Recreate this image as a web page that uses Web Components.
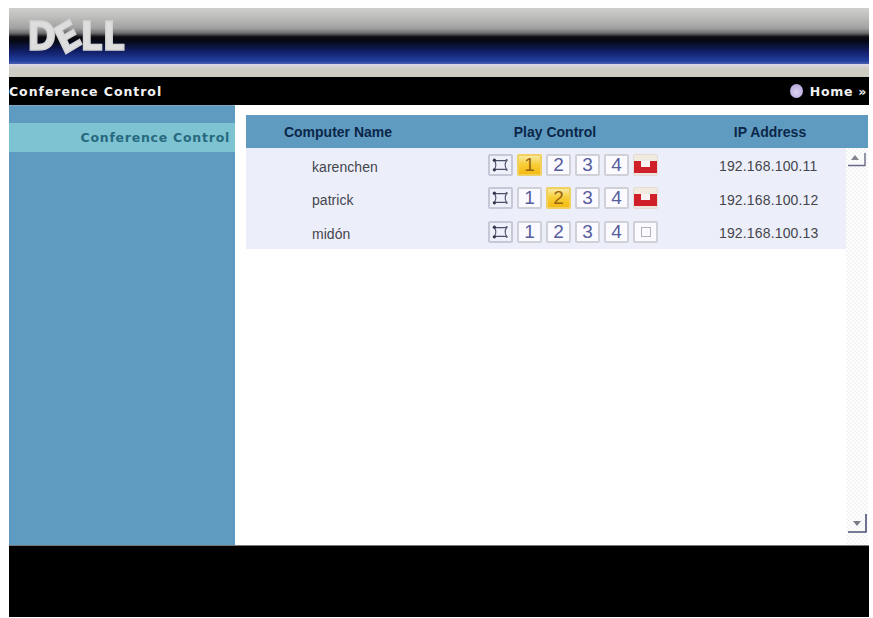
<!DOCTYPE html>
<html>
<head>
<meta charset="utf-8">
<title>Conference Control</title>
<style>
  html, body { margin: 0; background: #fff; }
  body { padding: 8px 4px 0 9px; font-family: "Liberation Sans", Arial, sans-serif; }
</style>
</head>
<body>
<dell-page>
  <dell-banner slot="banner"></dell-banner>
  <title-bar slot="title" heading="Conference Control"></title-bar>
  <side-nav slot="side">
    <nav-item>Conference Control</nav-item>
  </side-nav>
  <conf-table slot="main">
    <conf-row name="karenchen" ip="192.168.100.11" active="1" stop="on"></conf-row>
    <conf-row name="patrick" ip="192.168.100.12" active="2" stop="on"></conf-row>
    <conf-row name="midón" ip="192.168.100.13" stop="off"></conf-row>
  </conf-table>
</dell-page>

<script>
(() => {
  const define = (tag, css, html, setup) => {
    customElements.define(tag, class extends HTMLElement {
      connectedCallback() {
        if (this.shadowRoot) return;
        const root = this.attachShadow({ mode: 'open' });
        root.innerHTML = `<style>${css}</style>${typeof html === 'function' ? html(this) : html}`;
        if (setup) setup(root, this);
      }
    });
  };

  define('dell-page', `
    :host { display: block; width: 860px; height: 609px; filter: blur(.7px); }
    .page { display: grid; grid-template-rows: 69px 28px 440px 72px; height: 100%; }
    .body { display: grid; grid-template-columns: 226px 1fr; min-height: 0; }
    .foot { background: #000; border-top: 1px solid #777; box-sizing: border-box; }
  `, `
    <div class="page">
      <slot name="banner"></slot>
      <slot name="title"></slot>
      <div class="body"><slot name="side"></slot><slot name="main"></slot></div>
      <div class="foot"></div>
    </div>
  `);

  define('dell-banner', `
    :host { display: block; }
    .top {
      height: 56px; box-sizing: border-box; padding: 14px 0 0 18px;
      background: linear-gradient(#cfcfcd 0, #bdbdbb 9px, #a2a2a2 20px, #6f6f6f 25px, #0b0b10 29px, #060814 33px, #12206a 44px, #2340a0 53px, #4a60b0 56px);
    }
    .under { height: 13px; background: linear-gradient(#dcd8e6, #cfcdc4 5px, #cdccc2); }
    .logo {
      display: flex; align-items: center; height: 30px; width: 114px;
      font: bold 39px/30px "DejaVu Sans", sans-serif;
      color: #dedede;
      -webkit-text-stroke: 1.4px #d4d4d4;
      transform: scaleX(.9); transform-origin: 0 50%;
    }
    .logo span { display: block; }
    .e { transform: rotate(-28deg) translateY(1px); }
  `, `
    <div class="top">
      <div class="logo"><span>D</span><span class="e">E</span><span>L</span><span>L</span></div>
    </div>
    <div class="under"></div>
  `);

  define('title-bar', `
    :host { display: flex; align-items: center; justify-content: space-between; background: #000; color: #f2f2f2; font: bold 12.5px "DejaVu Sans", sans-serif; }
    .name { letter-spacing: .95px; }
    .home { display: flex; align-items: center; gap: 7px; padding-right: 2px; letter-spacing: .7px; }
    .ball { width: 13px; height: 14px; border-radius: 50%; background: radial-gradient(circle at 50% 60%, #dcd4f2, #a99cd6); }
  `, (el) => `
    <span class="name">${el.getAttribute('heading')}</span>
    <span class="home"><i class="ball"></i><span>Home »</span></span>
  `);

  define('side-nav', `
    :host { display: block; background: #5f9bc1; padding-top: 17px; border-top: 1px solid #7fa8c4; box-sizing: border-box; }
  `, `<slot></slot>`);

  define('nav-item', `
    :host {
      display: block; height: 29px; padding-right: 5px; text-align: right;
      background: #7ec3d2; color: #27697f; font: bold 12.5px/29px "DejaVu Sans", sans-serif; letter-spacing: .75px;
    }
  `, `<slot></slot>`);

  define('conf-table', `
    :host { display: block; background: #fff; padding: 10px 1px 0 11px; height: 440px; box-sizing: border-box; }
    .head {
      display: grid; grid-template-columns: 184px 250px 1fr; align-items: center; text-align: center;
      height: 33px; background: #5f9bc1; color: #0b2748; font: bold 14px "Liberation Sans", Arial, sans-serif;
    }
    .head .ip { padding-right: 8px; }
    .wrap { display: grid; grid-template-columns: 1fr 22px; height: 397px; }
    .bar {
      display: flex; flex-direction: column; justify-content: space-between; align-items: flex-start;
      padding: 2px 0 12px 1px; box-sizing: border-box;
      background: repeating-conic-gradient(#f3f5f5 0 25%, #fff 0 50%) 0 0 / 4px 4px;
    }
    .btn { width: 20px; height: 20px; display: block; }
  `, `
    <div class="head"><span>Computer Name</span><span>Play Control</span><span class="ip">IP Address</span></div>
    <div class="wrap">
      <div><slot></slot></div>
      <div class="bar">
        <svg class="btn" viewBox="0 0 20 20"><path d="M4 10l4-5 4 5z" fill="#84848f"/><path d="M1 15.5h17V3" fill="none" stroke="#6a6a88" stroke-width="1.4"/></svg>
        <svg class="btn" viewBox="0 0 20 20"><path d="M6 8l4 5 4-5z" fill="#7a7a88"/><path d="M1 19h18V1" fill="none" stroke="#4f4f78" stroke-width="1.6"/></svg>
      </div>
    </div>
  `);

  const modeIcon = `<svg viewBox="0 0 24 18" width="24" height="18"><g fill="none" stroke="#4a5068" stroke-width="1.2"><path d="M5 4h14M5 14h14M5 4c2 3 2 7 0 10M19 4c-2 3-2 7 0 10"/></g><g fill="#33384e"><circle cx="5" cy="3.5" r="1.9"/><circle cx="5" cy="14.5" r="1.9"/><circle cx="19" cy="3.5" r="1.3" fill="#5a6078"/><circle cx="19" cy="14.5" r="1.3" fill="#5a6078"/></g></svg>`;

  define('play-key', `
    :host {
      display: flex; align-items: center; justify-content: center; box-sizing: border-box;
      width: 25px; height: 22px; background: #fbfbff; border: 2px solid #cfd0d8; border-radius: 2px;
      color: #565c9c; font: 19px "Liberation Sans", Arial, sans-serif;
    }
    :host([on]) { background: linear-gradient(#f8e9a0, #f7cf3a 45%, #f4bb12); border-color: #f0d060; color: #9a6512; }
    :host([stop]) { display: block; background: linear-gradient(#f1ebdf 0 32%, #cf1f28 32%, #cf1f28 92%, #f0e4e0 92%); border-color: #e4dcd4; border-width: 1px; overflow: hidden; }
    .notch { display: block; width: 9px; height: 6px; margin: 6px auto 0; background: #f8f2f2; }
    .box { width: 8px; height: 8px; border: 1px solid #aeb2bc; }
  `, (el) => {
    if (el.hasAttribute('stop')) return '<i class="notch"></i>';
    if (el.hasAttribute('idle')) return '<i class="box"></i>';
    return '<slot></slot>';
  });

  define('conf-row', `
    :host {
      display: grid; grid-template-columns: 66px 176px 171px 1fr; align-items: center;
      height: 33.5px; background: #eceffa; color: #45454c; font-size: 14px;
    }
    .name { grid-column: 2; padding-top: 4px; letter-spacing: .05px; }
    .keys { display: flex; gap: 4px; }
    .ip { padding: 3px 0 0 60px; white-space: nowrap; font-size: 14px; letter-spacing: .15px; }
    .mode { background: #eef0fa; border-color: #c6c8d8; overflow: hidden; }
  `, (el) => {
    const active = el.getAttribute('active');
    const keys = ['1', '2', '3', '4'].map((n) =>
      `<play-key ${n === active ? 'on' : ''}>${n}</play-key>`).join('');
    const stop = el.getAttribute('stop') === 'on' ? '<play-key stop></play-key>' : '<play-key idle></play-key>';
    return `
      <span class="name">${el.getAttribute('name')}</span>
      <div class="keys"><play-key class="mode">${modeIcon}</play-key>${keys}${stop}</div>
      <span class="ip">${el.getAttribute('ip')}</span>
    `;
  });
})();
</script>
</body>
</html>
